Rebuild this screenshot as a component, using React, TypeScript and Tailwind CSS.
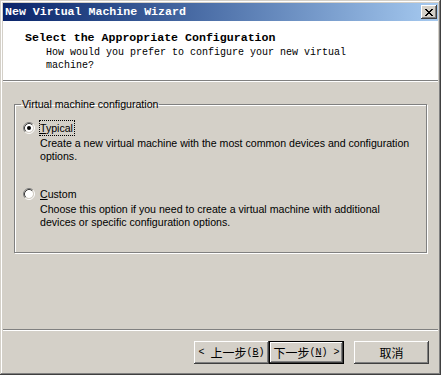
import React from "react";

const face = "bg-[#d4d0c8]";

function CloseButton() {
  return (
    <div className="w-[16px] h-[14px] bg-[#d4d0c8] flex items-center justify-center shadow-[inset_-1px_-1px_0_#404040,inset_1px_1px_0_#ffffff,inset_-2px_-2px_0_#808080]">
      <svg width="8" height="7" viewBox="0 0 8 7" shapeRendering="crispEdges" className="mt-[1px]">
        <g fill="#000">
          <rect x="0" y="0" width="2" height="1" />
          <rect x="6" y="0" width="2" height="1" />
          <rect x="1" y="1" width="2" height="1" />
          <rect x="5" y="1" width="2" height="1" />
          <rect x="2" y="2" width="4" height="1" />
          <rect x="3" y="3" width="2" height="1" />
          <rect x="2" y="4" width="4" height="1" />
          <rect x="1" y="5" width="2" height="1" />
          <rect x="5" y="5" width="2" height="1" />
          <rect x="0" y="6" width="2" height="1" />
          <rect x="6" y="6" width="2" height="1" />
        </g>
      </svg>
    </div>
  );
}

function Radio({ checked }: { checked?: boolean }) {
  return (
    <svg width="12" height="12" viewBox="0 0 12 12" className="shrink-0">
      <path d="M2.11 9.89 A5.5 5.5 0 0 1 9.89 2.11" fill="none" stroke="#808080" />
      <path d="M9.89 2.11 A5.5 5.5 0 0 1 2.11 9.89" fill="none" stroke="#ffffff" />
      <circle cx="6" cy="6" r="4" fill="#ffffff" />
      <path d="M2.82 9.18 A4.5 4.5 0 0 1 9.18 2.82" fill="none" stroke="#404040" />
      <path d="M9.18 2.82 A4.5 4.5 0 0 1 2.82 9.18" fill="none" stroke="#d4d0c8" />
      {checked && <circle cx="6" cy="6" r="2" fill="#000000" />}
    </svg>
  );
}

function Option({
  label,
  rest,
  lines,
  checked,
  focused,
}: {
  label: string;
  rest: string;
  lines: string[];
  checked?: boolean;
  focused?: boolean;
}) {
  return (
    <div className="flex flex-col">
      <div className="flex items-center gap-[4px] h-[16px]">
        <Radio checked={checked} />
        <span
          className={
            focused
              ? "border border-dotted border-black pr-[1px] leading-[14px]"
              : "border border-transparent pr-[1px] leading-[14px]"
          }
        >
          <span className="underline">{label}</span>
          {rest}
        </span>
      </div>
      <div className="pl-[17px] mt-[1px]">
        {lines.map((l) => (
          <div key={l} className="leading-[13px] whitespace-nowrap">
            {l}
          </div>
        ))}
      </div>
    </div>
  );
}

function Button({ children, isDefault }: { children: React.ReactNode; isDefault?: boolean }) {
  return (
    <div
      className={
        isDefault
          ? "w-[75px] h-[23px] bg-[#d4d0c8] border border-black flex items-center justify-center shadow-[inset_-1px_-1px_0_#404040,inset_1px_1px_0_#ffffff,inset_-2px_-2px_0_#808080]"
          : "w-[75px] h-[23px] bg-[#d4d0c8] flex items-center justify-center shadow-[inset_-1px_-1px_0_#404040,inset_1px_1px_0_#ffffff,inset_-2px_-2px_0_#808080]"
      }
    >
      <span className="flex items-center text-[12px] leading-none text-black font-['Noto_Sans_CJK_SC',sans-serif] whitespace-pre">
        {children}
      </span>
    </div>
  );
}

function Ascii({ children }: { children: React.ReactNode }) {
  return <span className="font-['Liberation_Mono',monospace] text-[10px] whitespace-pre">{children}</span>;
}

export default function App() {
  return (
    <div
      className={`w-[441px] h-[375px] ${face} p-[3px] flex flex-col shadow-[inset_-1px_-1px_0_#404040,inset_1px_1px_0_#d4d0c8,inset_-2px_-2px_0_#808080,inset_2px_2px_0_#ffffff]`}
    >
      {/* Title bar */}
      <div className="h-[18px] shrink-0 flex items-center justify-between bg-linear-to-r from-[#0a246a] to-[#a6caf0] pl-[2px] pr-[1px]">
        <span className="text-white font-bold text-[11.6px] leading-none font-['Liberation_Mono',monospace]">
          New Virtual Machine Wizard
        </span>
        <CloseButton />
      </div>

      {/* Header */}
      <div className="h-[60px] shrink-0 bg-white pl-[22px] pt-[10px] border-b border-[#808080] font-['Liberation_Mono',monospace] text-black">
        <div className="font-bold text-[11.6px] leading-[14px]">Select the Appropriate Configuration</div>
        <div className="pl-[21px] mt-[1px] text-[10px] leading-[13px]">
          <div>How would you prefer to configure your new virtual</div>
          <div>machine?</div>
        </div>
      </div>
      <div className="h-px shrink-0 bg-white" />

      {/* Body */}
      <div className="flex-1 px-[11px] pt-[16px] font-['Liberation_Sans',Arial,sans-serif] text-[10.6px] text-black">
        <fieldset className="border border-[#808080] shadow-[1px_1px_0_#ffffff,inset_1px_1px_0_#ffffff] pl-[8px] pr-[8px] pb-[23px]">
          <legend className="ml-[-2px] px-[1px] leading-[13px]">Virtual machine configuration</legend>
          <div className="flex flex-col gap-[23px] pt-[9px]">
            <Option
              label="T"
              rest="ypical"
              checked
              focused
              lines={[
                "Create a new virtual machine with the most common devices and configuration",
                "options.",
              ]}
            />
            <Option
              label="C"
              rest="ustom"
              lines={[
                "Choose this option if you need to create a virtual machine with additional",
                "devices or specific configuration options.",
              ]}
            />
          </div>
        </fieldset>
      </div>

      {/* Footer */}
      <div className="h-px shrink-0 bg-[#808080]" />
      <div className="h-px shrink-0 bg-white" />
      <div className="shrink-0 flex justify-end pt-[10px] pb-[8px] pr-[9px]">
        <Button>
          <Ascii>{"< "}</Ascii>上一步<Ascii>(<span className="underline">B</span>)</Ascii>
        </Button>
        <Button isDefault>
          下一步<Ascii>(<span className="underline">N</span>)</Ascii>
          <Ascii>{" >"}</Ascii>
        </Button>
        <div className="w-[10px]" />
        <Button>取消</Button>
      </div>
    </div>
  );
}
